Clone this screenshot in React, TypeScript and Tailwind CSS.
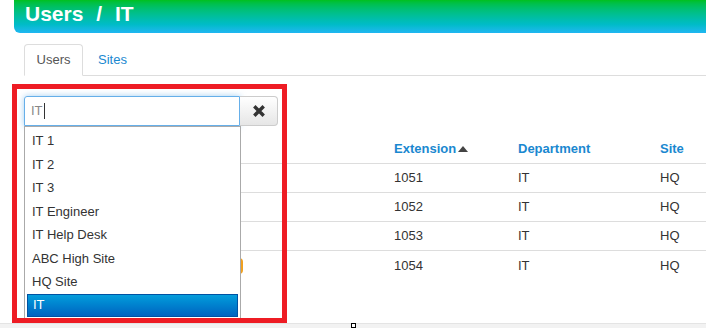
import React from "react";

const options = ["IT 1", "IT 2", "IT 3", "IT Engineer", "IT Help Desk", "ABC High Site", "HQ Site", "IT"];

const rows = [
  { ext: "1051", dept: "IT", site: "HQ" },
  { ext: "1052", dept: "IT", site: "HQ" },
  { ext: "1053", dept: "IT", site: "HQ" },
  { ext: "1054", dept: "IT", site: "HQ", badge: true },
];

export default function App() {
  return (
    <div
      className="relative w-[706px] h-[328px] overflow-hidden bg-white text-[13px] text-[#333]"
      style={{ fontFamily: '"Liberation Sans", Arial, sans-serif' }}
    >
      {/* Header banner */}
      <div className="ml-[14px] h-[33px] rounded-bl-[6px] bg-gradient-to-b from-[#03c01c] to-[#1fb6f2] pl-[11px]">
        <h1 className="text-[21px] font-bold leading-[27px] text-white">
          Users <span className="mx-[7px]">/</span> IT
        </h1>
      </div>

      <div className="pl-[24px]">
        {/* Tabs */}
        <div className="mt-[11px] flex h-[32px] items-end border-b border-[#ddd]">
          <div className="-mb-px flex h-[32px] w-[59px] items-center justify-center rounded-t-[4px] border border-b-white border-[#ddd] bg-white text-[#555]">
            Users
          </div>
          <div className="flex h-[31px] items-center px-[15px] text-[#1a88d0]">Sites</div>
        </div>

        {/* Search group */}
        <div className="mt-[20px] flex h-[30px]">
          <div className="flex w-[216px] items-center rounded-tl-[3px] border border-[#66afe9] pl-[6px] text-[#888] shadow-[0_0_6px_rgba(102,175,233,0.6)]">
            IT<span className="ml-px inline-block h-[16px] w-px bg-[#333]" />
          </div>
          <div className="flex w-[38px] items-center justify-center rounded-r-[4px] border border-l-0 border-[#ccc] bg-gradient-to-b from-white to-[#e6e6e6]">
            <svg width="12" height="12" viewBox="0 0 12 12">
              <path d="M2.5 2.5 L9.5 9.5 M9.5 2.5 L2.5 9.5" stroke="#333" strokeWidth="3.4" strokeLinecap="square" />
            </svg>
          </div>
        </div>

        {/* Table */}
        <div className="mt-[8px]">
          <div className="grid h-[30px] grid-cols-[370px_124px_142px_1fr] items-center border-b border-[#ddd] font-bold text-[#1a88d0]">
            <div />
            <div className="flex items-center gap-[2px]">
              Extension
              <svg width="10" height="6" viewBox="0 0 10 6">
                <path d="M0 6 L5 0 L10 6 Z" fill="#444" />
              </svg>
            </div>
            <div>Department</div>
            <div>Site</div>
          </div>
          {rows.map((r, i) => (
            <div
              key={r.ext}
              className={`grid h-[29px] grid-cols-[370px_124px_142px_1fr] items-center ${
                i < rows.length - 1 ? "border-b border-[#ddd]" : ""
              }`}
            >
              <div>
                {r.badge && <span className="ml-[196px] block h-[16px] w-[23px] rounded-[4px] bg-[#f0a020]" />}
              </div>
              <div>{r.ext}</div>
              <div>{r.dept}</div>
              <div>{r.site}</div>
            </div>
          ))}
        </div>
      </div>

      {/* Autocomplete dropdown */}
      <div className="absolute left-[24px] top-[126px] w-[217px] border border-[#aaa] bg-white pt-[2px]">
        {options.map((o, i) =>
          i === options.length - 1 ? (
            <div
              key={o}
              className="mx-[2px] flex h-[23px] items-center border border-[#0052a3] bg-gradient-to-b from-[#069ddb] to-[#0363c0] pl-[5px] text-white"
            >
              {o}
            </div>
          ) : (
            <div key={o} className="flex h-[23.5px] items-center pl-[7px]">
              {o}
            </div>
          )
        )}
        <div className="h-[6px]" />
      </div>

      {/* Annotation highlight */}
      <div className="pointer-events-none absolute left-[12px] top-[84px] h-[239px] w-[275px] border-[5px] border-[#ee1c24]" />

      {/* Bottom bar */}
      <div className="absolute bottom-0 left-0 h-[5px] w-full border-t border-[#e4e4e4] bg-[#f2f2f2]" />
      <div className="absolute bottom-0 left-[351px] h-[5px] w-[5px] border border-black bg-white" />
    </div>
  );
}
